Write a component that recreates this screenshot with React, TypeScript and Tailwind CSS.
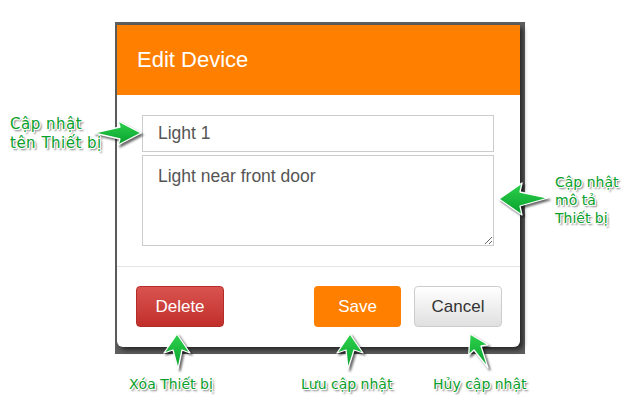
import React from "react";

const labelCls =
  "absolute font-['DejaVu_Sans',Verdana,sans-serif] text-[14px] leading-[18px] text-[#0aa02c] [text-shadow:-1px_0_#fff,1px_0_#fff,0_-1px_#fff,0_1px_#fff,1px_1px_#fff,2px_2px_2px_rgba(0,0,0,0.6)] whitespace-nowrap";

export default function App() {
  return (
    <div className="relative w-[634px] h-[404px] bg-white overflow-hidden font-['Liberation_Sans',Arial,sans-serif]">
      {/* backdrop + modal */}
      <div className="absolute left-[115px] top-[22px] w-[410px] h-[332px] bg-[#5e5e5e] pt-[3px] pl-[2px]">
        <div className="w-[403px] h-[322px] bg-white rounded-b-[6px] shadow-[3px_3px_5px_rgba(0,0,0,0.6)] flex flex-col overflow-hidden">
          <div className="h-[70px] bg-[#ff8000] flex items-center px-[20px]">
            <span className="text-white text-[22px] leading-none font-['Liberation_Sans',Arial,sans-serif]">Edit Device</span>
          </div>
          <div className="pt-[20px] pb-[20px] pl-[25px] pr-[26px] flex flex-col gap-[3px] border-b border-[#e5e5e5]">
            <input
              readOnly
              value="Light 1"
              className="h-[37px] w-full border border-[#ccc] px-[15px] text-[17.5px] text-[#555] outline-none bg-white font-['Liberation_Sans',Arial,sans-serif]"
            />
            <textarea
              readOnly
              value="Light near front door"
              className="h-[91px] w-full border border-[#ccc] px-[15px] pt-[9px] text-[17.5px] leading-[22px] text-[#555] outline-none bg-white font-['Liberation_Sans',Arial,sans-serif]"
            />
          </div>
          <div className="flex-1 flex items-start pt-[19px] pl-[19px] pr-[18px]">
            <button className="w-[88px] h-[41px] rounded-[4px] border border-[#b52b27] bg-gradient-to-b from-[#d9534f] to-[#c12e2a] text-white text-[17px]">
              Delete
            </button>
            <div className="flex-1" />
            <button className="w-[87px] h-[41px] rounded-[4px] bg-[#ff8000] text-white text-[17px]">
              Save
            </button>
            <button className="ml-[13px] w-[88px] h-[41px] rounded-[4px] border border-[#ccc] bg-gradient-to-b from-[#ffffff] to-[#e0e0e0] text-[#333] text-[17px]">
              Cancel
            </button>
          </div>
        </div>
      </div>

      {/* arrows */}
      <svg
        className="absolute left-0 top-0 pointer-events-none drop-shadow-[2px_2px_1px_rgba(0,0,0,0.6)]"
        width="634"
        height="404"
        viewBox="0 0 634 404"
      >
        <defs>
          <linearGradient id="g" x1="0" y1="0" x2="0" y2="1">
            <stop offset="0" stopColor="#2fd14d" />
            <stop offset="1" stopColor="#05a02c" />
          </linearGradient>
        </defs>
        <g fill="url(#g)" stroke="#ffffff" strokeWidth="1.3" strokeLinejoin="round">
          <polygon points="94,133 120,127 118,121 141,133 118,145 120,139" />
          <polygon points="548,198 520,192 522,183 499,199 522,215 520,206" />
          <polygon points="177,334 164,353 173,350 178,369 182,350 190,353" />
          <polygon points="350,334 337,353 346,350 348,369 354,350 363,353" />
          <polygon points="470,334 468.7,355 474,350 488,368 481,346 488.1,344.8" />
        </g>
      </svg>

      {/* labels */}
      <div className={labelCls + " left-[10px] top-[115px] text-[15px] leading-[19px] tracking-[0.5px]"}>
        Cập nhật
        <br />
        tên Thiết bị
      </div>
      <div className={labelCls + " left-[555px] top-[173px]"}>
        Cập nhật
        <br />
        mô tả
        <br />
        Thiết bị
      </div>
      <div className={labelCls + " left-[129px] top-[375px]"}>Xóa Thiết bị</div>
      <div className={labelCls + " left-[301px] top-[375px]"}>Lưu cập nhật</div>
      <div className={labelCls + " left-[433px] top-[375px]"}>Hủy cập nhật</div>
    </div>
  );
}
